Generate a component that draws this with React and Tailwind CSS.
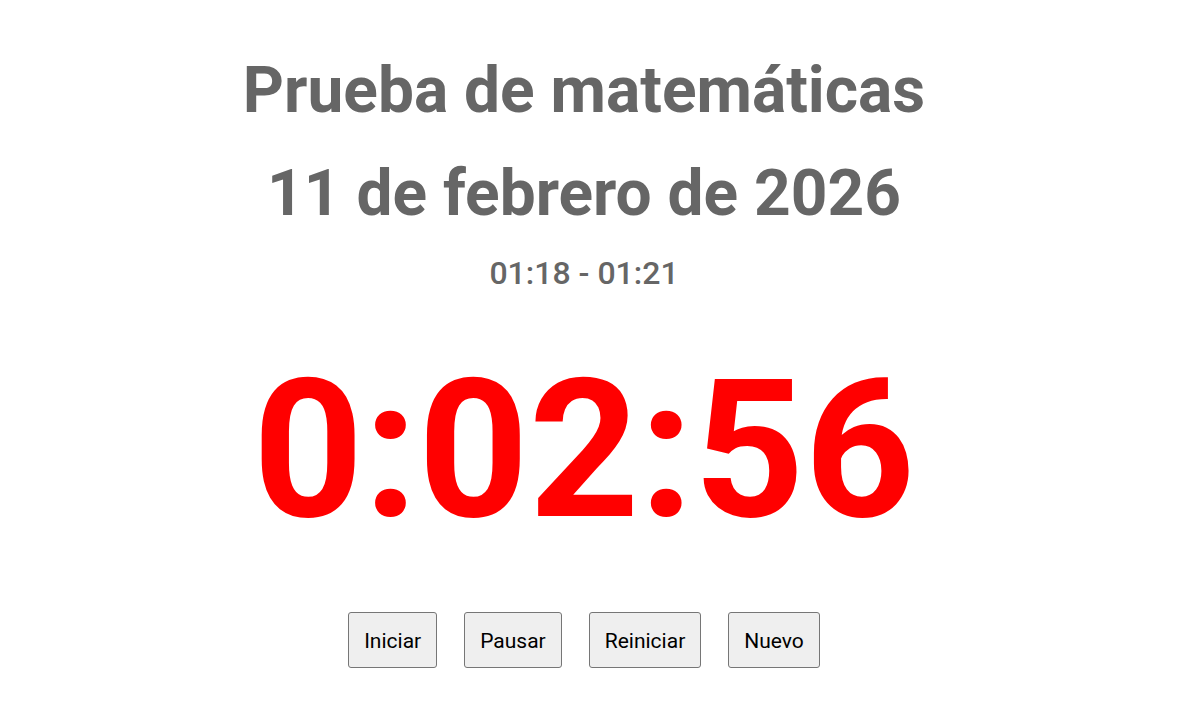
import React from 'react';

const buttons = ['Iniciar', 'Pausar', 'Reiniciar', 'Nuevo'];

export default function App() {
  return (
    <div className="min-h-screen bg-white pr-3" style={{ fontFamily: 'Roboto, "Noto Sans", sans-serif' }}>
      <div className="flex flex-col items-center pt-[53px]">
        <h1 className="text-[64px] leading-[75px] font-bold text-[#666666]">Prueba de matemáticas</h1>
        <h1 className="mt-[28px] text-[64px] leading-[75px] font-bold text-[#666666]">11 de febrero de 2026</h1>
        <div className="mt-[23px] text-[32px] leading-[38px] font-medium text-[#666666]">01:18 - 01:21</div>
        <div className="mt-[45px] text-[193px] leading-[226px] font-bold text-[#ff0000]">0:02:56</div>
        <div className="mt-[49px] flex gap-[27px]">
          {buttons.map((b) => (
            <button
              key={b}
              className="h-[56px] px-[15px] pt-[3px] text-[21px] text-black bg-[#efefef] border border-[#767676] rounded-[3px]"
            >
              {b}
            </button>
          ))}
        </div>
      </div>
    </div>
  );
}
